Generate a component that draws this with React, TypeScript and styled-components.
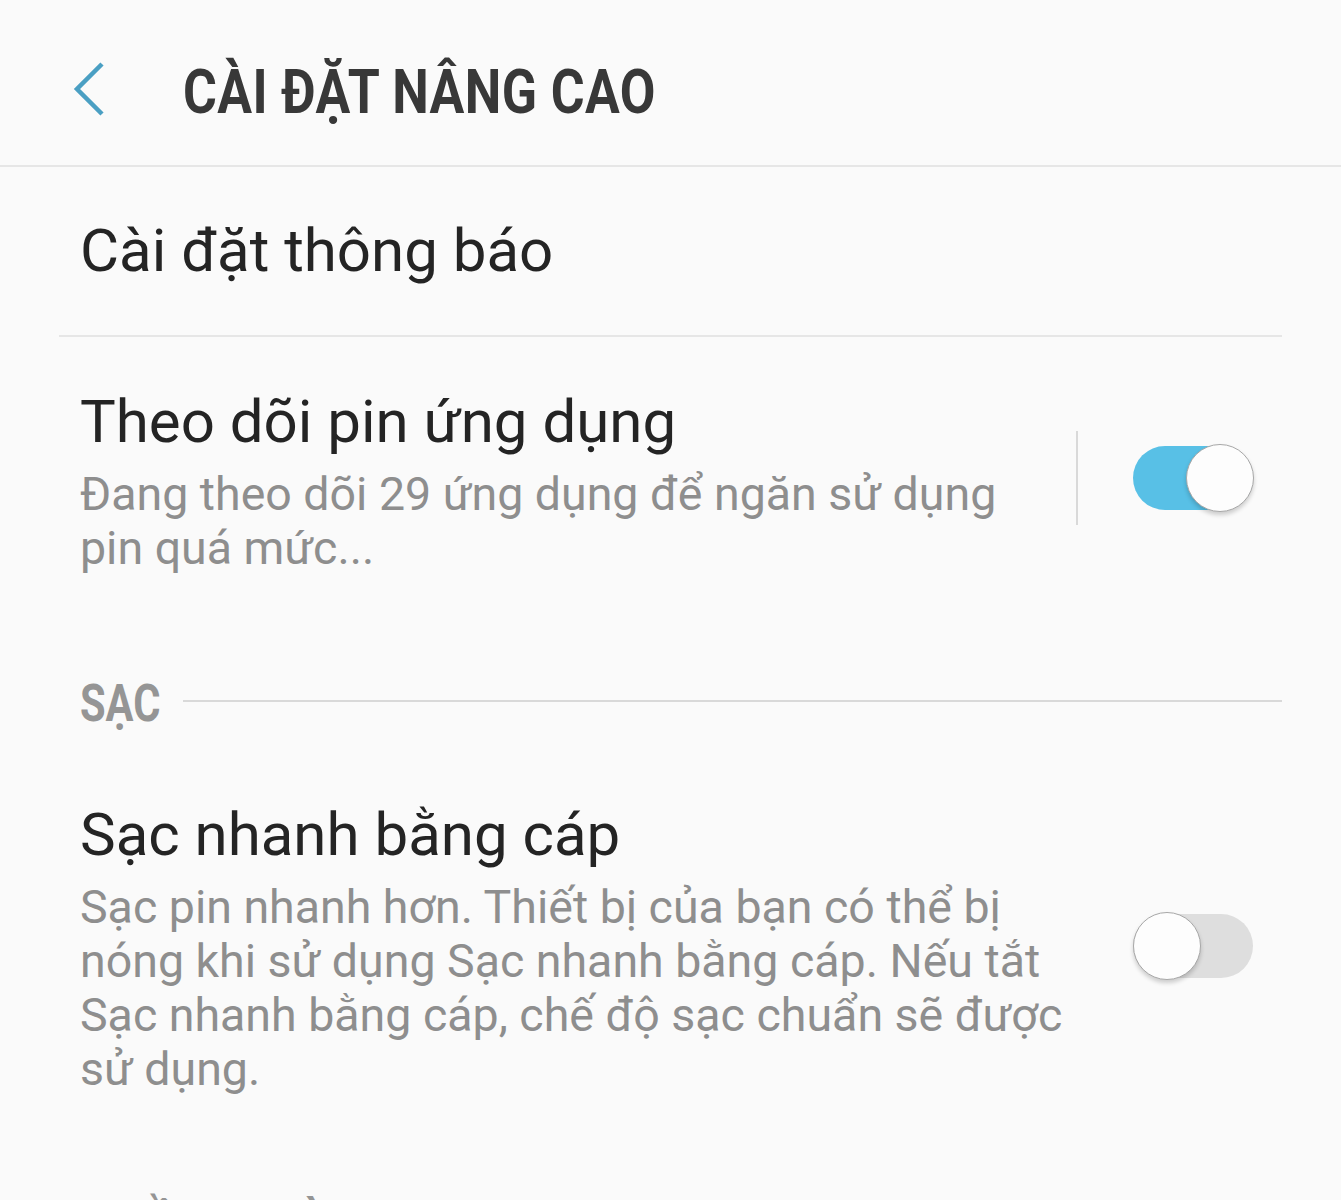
import React from "react";
import styled, { createGlobalStyle } from "styled-components";

const Global = createGlobalStyle`
  html, body { margin: 0; padding: 0; background: #fafafa; }
  body { font-family: Roboto, "Noto Sans", sans-serif; -webkit-font-smoothing: antialiased; }
  #root { width: 1341px; height: 1200px; overflow: hidden; background: #fafafa; }
`;

const Page = styled.div`
  width: 1341px;
  display: flex;
  flex-direction: column;
`;

const Header = styled.header`
  height: 147px;
  padding-top: 18px;
  display: flex;
  align-items: center;
  border-bottom: 2px solid #e6e6e6;
  box-sizing: content-box;
`;

const BackButton = styled.button`
  width: 183px;
  height: 100%;
  padding: 0 0 6px 72px;
  border: 0;
  background: transparent;
  display: flex;
  align-items: center;
  justify-content: flex-start;
  box-sizing: border-box;
`;

const Title = styled.h1`
  margin: 0;
  font-family: Roboto, sans-serif;
  font-weight: 700;
  font-size: 62px;
  color: #383838;
  display: inline-block;
  transform: scaleX(0.835);
  transform-origin: left center;
  white-space: nowrap;
  letter-spacing: 0.5px;
`;

const Row = styled.div<{ $h?: number }>`
  display: flex;
  align-items: center;
  padding: 0 88px 0 80px;
  min-height: ${(p) => p.$h ?? 0}px;
`;

const TextCol = styled.div`
  flex: 1;
  display: flex;
  flex-direction: column;
`;

const ItemTitle = styled.div`
  font-size: 60px;
  line-height: 70px;
  color: #242424;
  white-space: nowrap;
`;

const ItemSub = styled.div<{ $w: number }>`
  margin-top: 10px;
  font-size: 46.5px;
  line-height: 54px;
  color: #8e8e8e;
  width: ${(p) => p.$w}px;
`;

const Divider = styled.div`
  height: 2px;
  background: #e6e6e6;
  margin: 0 59px;
`;

const VRule = styled.div`
  width: 2px;
  height: 94px;
  background: #d9d9d9;
  margin-right: 55px;
  margin-top: -6px;
`;

const Track = styled.div<{ $on: boolean }>`
  position: relative;
  width: 120px;
  height: 64px;
  border-radius: 32px;
  background: ${(p) => (p.$on ? "#58c0e6" : "#dedede")};
  flex-shrink: 0;
  margin-top: ${(p) => (p.$on ? "-6px" : "-4px")};
`;

const Thumb = styled.div<{ $on: boolean }>`
  position: absolute;
  top: -2px;
  ${(p) => (p.$on ? "right: -1px;" : "left: 0px;")}
  width: 68px;
  height: 68px;
  border-radius: 50%;
  box-sizing: border-box;
  background: #fdfdfd;
  border: 1.5px solid #a8a8a8;
  box-shadow: 0 3px 4px rgba(0, 0, 0, 0.18);
`;

const SectionRow = styled.div`
  display: flex;
  align-items: center;
  padding: 0 59px 0 80px;
  height: 80px;
`;

const SectionLabel = styled.div`
  font-weight: 700;
  font-size: 52px;
  color: #959595;
  width: 103px;
  white-space: nowrap;
  span {
    display: inline-block;
    transform: scaleX(0.8);
    transform-origin: left center;
  }
`;

const SectionLine = styled.div`
  flex: 1;
  height: 2px;
  background: #d9d9d9;
  margin-top: -4px;
`;

const Toggle = ({ on }: { on: boolean }) => (
  <Track $on={on}>
    <Thumb $on={on} />
  </Track>
);

const Spacer = styled.div<{ $h: number }>`
  height: ${(p) => p.$h}px;
`;

export default function App() {
  return (
    <Page>
      <Global />
      <Header>
        <BackButton aria-label="back">
          <svg width="34" height="54" viewBox="0 0 34 54">
            <polyline points="30,2 5,27 30,52" fill="none" stroke="#4a9fc3" strokeWidth="4.5" />
          </svg>
        </BackButton>
        <Title>CÀI ĐẶT NÂNG CAO</Title>
      </Header>

      <Row $h={168}>
        <ItemTitle>Cài đặt thông báo</ItemTitle>
      </Row>
      <Divider />

      <Spacer $h={50} />
      <Row>
        <TextCol>
          <ItemTitle>Theo dõi pin ứng dụng</ItemTitle>
          <ItemSub $w={940}>Đang theo dõi 29 ứng dụng để ngăn sử dụng pin quá mức...</ItemSub>
        </TextCol>
        <VRule />
        <Toggle on={true} />
      </Row>

      <Spacer $h={88} />
      <SectionRow>
        <SectionLabel><span>SẠC</span></SectionLabel>
        <SectionLine />
      </SectionRow>

      <Spacer $h={57} />
      <Row>
        <TextCol>
          <ItemTitle>Sạc nhanh bằng cáp</ItemTitle>
          <ItemSub $w={1010}>
            Sạc pin nhanh hơn. Thiết bị của bạn có thể bị nóng khi sử dụng Sạc nhanh bằng cáp. Nếu tắt Sạc nhanh bằng cáp, chế độ sạc chuẩn sẽ được sử dụng.
          </ItemSub>
        </TextCol>
        <Toggle on={false} />
      </Row>

      <Spacer $h={89} />
      <SectionRow>
        <SectionLabel><span>NHIỀU NGƯỜI</span></SectionLabel>
      </SectionRow>
    </Page>
  );
}
